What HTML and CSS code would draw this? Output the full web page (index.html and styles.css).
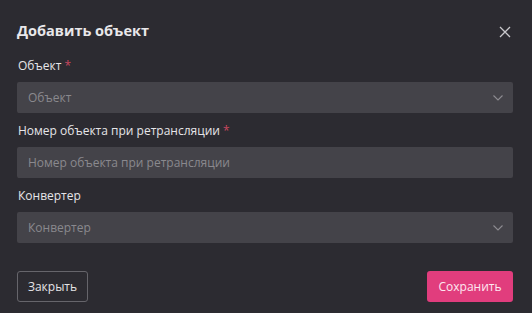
FILE: index.html
```html
<!DOCTYPE html>
<html lang="ru">
  <head>
    <meta charset="UTF-8" />
    <meta name="viewport" content="width=device-width, initial-scale=1.0" />
    <title>Добавить объект</title>
    <link rel="stylesheet" href="styles.css">
  </head>
  <body>
    <div class="modal">
      <div class="modal-header">
        <h2>Добавить объект</h2>
        <button class="close-btn" aria-label="Закрыть">
          <svg width="12" height="12" viewBox="0 0 12 12">
            <path d="M1 1 L11 11 M11 1 L1 11" stroke="#c9c8cc" stroke-width="1.3" fill="none" />
          </svg>
        </button>
      </div>

      <div class="field">
        <label>Объект <span class="req">*</span></label>
        <div class="select">
          <span class="placeholder">Объект</span>
          <svg class="chevron" width="10" height="6" viewBox="0 0 10 6">
            <path d="M0.5 0.5 L5 5 L9.5 0.5" stroke="#8d8c91" stroke-width="1.1" fill="none" />
          </svg>
        </div>
      </div>

      <div class="field">
        <label>Номер объекта при ретрансляции <span class="req">*</span></label>
        <input type="text" placeholder="Номер объекта при ретрансляции" />
      </div>

      <div class="field">
        <label>Конвертер</label>
        <div class="select">
          <span class="placeholder">Конвертер</span>
          <svg class="chevron" width="10" height="6" viewBox="0 0 10 6">
            <path d="M0.5 0.5 L5 5 L9.5 0.5" stroke="#8d8c91" stroke-width="1.1" fill="none" />
          </svg>
        </div>
      </div>

      <div class="modal-footer">
        <button class="btn-close">Закрыть</button>
        <button class="btn-save">Сохранить</button>
      </div>
    </div>
  </body>
</html>
```

FILE: styles.css
```css
body {
  margin: 0;
  background: #2c2b31;
  font-family: "Open Sans", "Noto Sans", sans-serif;
  color: #e4e3e6;
}
.modal {
  width: 532px;
  height: 313px;
  box-sizing: border-box;
  padding: 16px 19px 0 17px;
}
.modal-header {
  display: flex;
  justify-content: space-between;
  align-items: center;
  height: 28px;
  margin-bottom: 13px;
}
.modal-header h2 {
  margin: 0;
  font-size: 14.5px;
  font-weight: 700;
  color: #e8e7ea;
}
.close-btn {
  background: none;
  border: none;
  padding: 0;
  width: 12px;
  height: 12px;
  margin-right: 2px;
  margin-top: 3px;
  display: flex;
  cursor: pointer;
}
.field {
  margin-bottom: 9px;
}
.field label {
  display: block;
  font-size: 12px;
  line-height: 17px;
  margin: 0 0 8px 1px;
  color: #e6e5e8;
}
.req {
  color: #c8475f;
}
.select,
.field input {
  width: 100%;
  height: 31px;
  box-sizing: border-box;
  background: #444349;
  border: none;
  border-radius: 2px;
  padding: 0 10px 0 11px;
  font-family: inherit;
  font-size: 12px;
  color: #e4e3e6;
  display: flex;
  align-items: center;
  justify-content: space-between;
}
.field input::placeholder,
.placeholder {
  color: #8a898e;
}
.field input:focus {
  outline: none;
}
.modal-footer {
  display: flex;
  justify-content: space-between;
  margin-top: 28px;
}
.modal-footer button {
  height: 31px;
  border-radius: 3px;
  font-family: inherit;
  font-size: 12px;
  cursor: pointer;
}
.btn-close {
  width: 71px;
  background: transparent;
  border: 1px solid #66656b;
  color: #e4e3e6;
}
.btn-save {
  width: 86px;
  background: #e13d7d;
  border: none;
  color: #fde8f0;
}
```
